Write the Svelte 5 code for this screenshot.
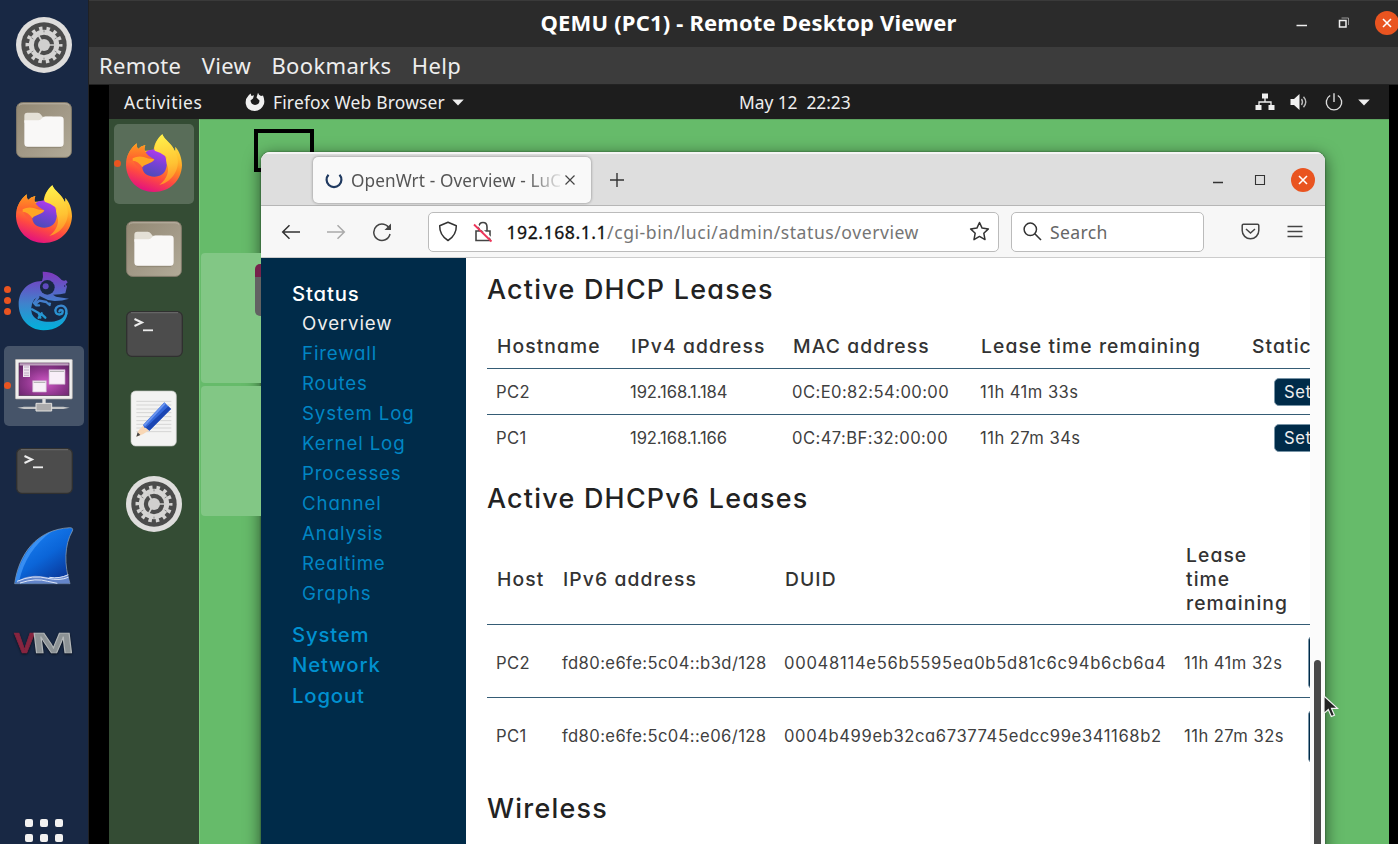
<script>
  const menus = ['Remote', 'View', 'Bookmarks', 'Help'];
  const statusLinks = ['Overview', 'Firewall', 'Routes', 'System Log', 'Kernel Log', 'Processes', 'Channel', 'Analysis', 'Realtime', 'Graphs'];
  const topLinks = ['System', 'Network', 'Logout'];
  const leases4 = [
    { host: 'PC2', ip: '192.168.1.184', mac: '0C:E0:82:54:00:00', left: '11h 41m 33s' },
    { host: 'PC1', ip: '192.168.1.166', mac: '0C:47:BF:32:00:00', left: '11h 27m 34s' }
  ];
  const leases6 = [
    { host: 'PC2', ip: 'fd80:e6fe:5c04::b3d/128', duid: '00048114e56b5595ea0b5d81c6c94b6cb6a4', left: '11h 41m 32s' },
    { host: 'PC1', ip: 'fd80:e6fe:5c04::e06/128', duid: '0004b499eb32ca6737745edcc99e341168b2', left: '11h 27m 32s' }
  ];
</script>

{#snippet gear()}
  <svg width="56" height="56" viewBox="0 0 168 168">
    <circle cx="84" cy="84" r="84" fill="#dedddc" />
    <circle cx="84" cy="84" r="68" fill="#4b4b4b" />
    <circle cx="84" cy="84" r="49" fill="none" stroke="#d5d4d3" stroke-width="13" stroke-dasharray="10 11.99" stroke-dashoffset="5" />
    <circle cx="84" cy="84" r="38" fill="none" stroke="#d5d4d3" stroke-width="15" />
    <circle cx="84" cy="84" r="18" fill="#d0cfce" />
    <path d="M84 84H122M84 84L65 51M84 84L65 117" stroke="#d0cfce" stroke-width="5" />
    <path d="M84 40v6M46 62l6 4M46 106l6-4M84 128v-6M122 106l-6-4M122 62l-6 4" stroke="#888" stroke-width="3" />
  </svg>
{/snippet}

{#snippet files()}
  <svg width="56" height="56" viewBox="0 0 57 57">
    <defs>
      <linearGradient id="tan" x1="0" y1="0" x2="1" y2="1"><stop stop-color="#928873" /><stop offset=".55" stop-color="#a39a88" /><stop offset="1" stop-color="#b2ab98" /></linearGradient>
    </defs>
    <rect x=".6" y=".6" width="55.8" height="55.8" rx="6" fill="url(#tan)" stroke="#81796a" />
    <path d="M3 3.5Q4 1.8 7 1.8H50Q53 1.8 54 3.5" fill="none" stroke="#bbb3a5" />
    <path d="M8.5 21V14Q8.5 11 11.5 11H22Q24 11 25.5 13L27 15H37V22Z" fill="#e4e0d6" />
    <path d="M8.5 18.5H23Q25 18.5 26.5 16.5Q28 14.8 30 14.8H45Q48.5 14.8 48.5 18V42Q48.5 45.6 45 45.6H12Q8.5 45.6 8.5 42Z" fill="#f9f8f7" />
    <path d="M11 46.4H46" stroke="#857c69" stroke-opacity=".65" />
  </svg>
{/snippet}

{#snippet firefox()}
  <svg class="fox" width="56" height="58" viewBox="48 556 168 174">
    <defs>
      <linearGradient id="flame" x1=".75" y1="0" x2=".4" y2="1"><stop stop-color="#fff250" /><stop offset=".32" stop-color="#ffc02d" /><stop offset=".52" stop-color="#ff8b22" /><stop offset=".74" stop-color="#ff4a41" /><stop offset="1" stop-color="#e3127f" /></linearGradient>
      <linearGradient id="globe" x1=".7" y1="0" x2=".4" y2="1"><stop stop-color="#b63af0" /><stop offset=".5" stop-color="#7842d6" /><stop offset="1" stop-color="#4e4bb9" /></linearGradient>
      <linearGradient id="wave" x1=".4" y1="0" x2=".5" y2="1"><stop stop-color="#fff04b" /><stop offset=".6" stop-color="#ffc333" /><stop offset="1" stop-color="#ff8a28" /></linearGradient>
      <linearGradient id="rim" x1="0" y1="0" x2="0" y2="1"><stop stop-color="#ff9d20" /><stop offset=".5" stop-color="#ff6a2d" /><stop offset="1" stop-color="#ff3a50" stop-opacity="0" /></linearGradient>
    </defs>
    <path d="M157 557C163 574 187 584 195 610L196 594C209 609 216 630 216 650C214 698 178 730 132 730C85 730 50 697 48 650C48 621 59 603 80 584Q79 594 84 601Q92 592 106 589Q102 598 104 606L131 605C132 586 142 569 157 557Z" fill="url(#flame)" />
    <path d="M104 612Q124 596 149 607L164 618L171 640Q171 682 134 684Q97 682 96 651Z" fill="url(#globe)" />
    <path d="M157 557C166 580 190 586 201 622C212 660 187 700 148 709C172 690 180 665 170 646Q166 634 170 625Q153 611 134 606C133 590 142 570 157 557Z" fill="url(#wave)" />
    <path d="M80 584Q79 594 84 601Q92 592 106 589Q101 601 106 610Q112 621 133 632Q130 641 107 648Q98 653 101 666Q79 656 69 636Q48 632 50 638Q52 606 80 584Z" fill="url(#rim)" />
    <path d="M68 629Q83 621 101 625Q113 631 133 632Q130 641 107 648Q99 650 97 656Q85 637 68 636Z" fill="#ffa624" />
  </svg>
{/snippet}

{#snippet terminal()}
  <svg width="57" height="46" viewBox="0 0 57 46">
    <rect x=".7" y=".7" width="55.6" height="44.6" rx="5" fill="#4c4c4c" stroke="#303030" stroke-width="1.3" />
    <path d="M5 1.7H52" stroke="#777" stroke-width=".8" />
    <path d="M8.5 8L16 11.5L8.5 15" fill="none" stroke="#ececec" stroke-width="2" />
    <path d="M17 19.3H27" stroke="#ececec" stroke-width="1.8" />
  </svg>
{/snippet}

<div class="shell">
  <aside class="dock host">
    <div class="slot">{@render gear()}</div>
    <div class="slot">{@render files()}</div>
    <div class="slot">{@render firefox()}</div>
    <div class="slot">
      <span class="pips"><i></i><i></i><i></i></span>
      <svg width="52" height="60" viewBox="55 63 156 180">
        <defs><linearGradient id="cham" gradientUnits="userSpaceOnUse" x1="0" y1="65" x2="0" y2="241"><stop stop-color="#8038bd" /><stop offset=".25" stop-color="#6257c6" /><stop offset=".55" stop-color="#3f83cc" /><stop offset="1" stop-color="#00b2db" /></linearGradient></defs>
        <path d="M129 65C155 64 178 78 186 90Q194 94 199 90L204 97L198 103L202 109L197 130L181 133L160 134L169 140L208 146Q188 153 165 153L145 150L120 138L104 148L97 162L94 178L97 192Q103 205 119 211C152 222 188 212 195 194L204 188C200 222 168 241 131 241C86 240 57 204 57 163C57 121 87 94 127 93Q132 82 129 65Z" fill="url(#cham)" />
        <path d="M116 141L103 159L109 166H118M109 161L119 152L140 156L150 165M144 160L151 161M97 178L117 189L122 203M126 190L117 203M124 191L137 203" fill="none" stroke="url(#cham)" stroke-width="7" stroke-linecap="round" stroke-linejoin="round" />
        <path d="M199 194C204 177 195 167 184 167C171 167 165 177 168 186C171 196 188 196 189 186C190 179 181 178 179 184" fill="none" stroke="url(#cham)" stroke-width="7" stroke-linecap="round" />
        <circle cx="143" cy="112" r="22" fill="#182844" /><circle cx="138" cy="109" r="9" fill="#5d4abe" />
        <circle cx="195" cy="108" r="2" fill="#182844" />
      </svg>
    </div>
    <div class="slot">
      <span class="tile"></span><span class="pips"><i></i></span>
      <svg class="remote" width="58" height="54" viewBox="45 327 174 162">
        <defs><radialGradient id="plum" cx=".52" cy=".6" r=".7"><stop stop-color="#cf58c5" /><stop offset=".55" stop-color="#91378f" /><stop offset="1" stop-color="#632466" /></radialGradient></defs>
        <rect x="46" y="328" width="171" height="119" rx="3" fill="#efeeed" stroke="#aaa6a3" stroke-width="2" />
        <rect x="57" y="339" width="150" height="98" fill="url(#plum)" stroke="#533553" stroke-width="2" />
        <path d="M59 343H206" stroke="#bd9fbd" stroke-width="7" />
        <path d="M69 346H90V381H69Z" fill="#eee4ef" /><path d="M72 351H87M72 360H87M72 369H87M72 376H87" stroke="#aa91af" stroke-width="2" />
        <path d="M147 359H195V403H147ZM98 392H139V426H98Z" fill="#f8eff8" stroke="#c3a6c5" stroke-width="2" />
        <path d="M150 364H192M101 397H136" stroke="#aaa" stroke-width="3" />
        <path d="M132 447V463" stroke="#ddd" stroke-width="10" />
        <path d="M52 473L72 470H190L209 473L190 477H72Z" fill="#c5c6c7" />
        <path d="M108 460H155V483H108Z" fill="#ababac" stroke="#e2e1df" stroke-width="3" />
      </svg>
    </div>
    <div class="slot">{@render terminal()}</div>
    <div class="slot">
      <svg width="60" height="58" viewBox="44 80 180 174">
        <defs><linearGradient id="fin" x1=".2" y1="0" x2=".9" y2="1"><stop stop-color="#1c84f7" /><stop offset=".5" stop-color="#0b65d8" /><stop offset="1" stop-color="#082d8c" /></linearGradient></defs>
        <path d="M46 250C59 161 111 88 211 82Q223 82 219 92C195 133 194 194 212 250Z" fill="url(#fin)" stroke="#99aabb" stroke-width="2" />
        <path d="M48 246C61 176 100 116 158 93C104 133 73 180 59 245Z" fill="#54a5ff" fill-opacity=".6" />
        <path d="M48 248Q81 220 128 228Q170 238 206 223L211 249Z" fill="#6485ca" />
        <path d="M53 243Q101 222 145 234Q182 242 207 231M62 248Q110 232 145 243L174 249M150 231Q180 236 207 223" fill="none" stroke="#dce6f9" stroke-width="3" />
      </svg>
    </div>
    <div class="slot"><span class="vm"><em>V</em><em>M</em></span></div>
    <div class="apps">{#each Array(9) as _}<i></i>{/each}</div>
  </aside>

  <main class="viewer">
    <header class="titlebar">
      <span class="spacer"></span>
      <h1>QEMU (PC1) - Remote Desktop Viewer</h1>
      <div class="controls">
        <svg width="12" height="12" viewBox="0 0 12 12"><path d="M.5 8.5H11" stroke="#eee" stroke-width="1.5" /></svg>
        <svg width="12" height="12" viewBox="0 0 12 12"><path d="M1.5 3.5H8V10H1.5Z" fill="none" stroke="#eee" stroke-width="1.5" /><path d="M3.5 1H10.5V8" fill="none" stroke="#999" /></svg>
        <span class="close"><svg width="12" height="12" viewBox="0 0 12 12"><path d="M2 2L10 10M10 2L2 10" stroke="#fff" stroke-width="1.6" /></svg></span>
      </div>
    </header>
    <nav class="menubar">{#each menus as item}<span>{item}</span>{/each}</nav>

    <section class="screen">
      <header class="topbar">
        <span class="activities">Activities</span>
        <svg class="ff" width="20" height="20" viewBox="0 0 20 20"><path d="M3.5 3.5L5.5 1.5L6.5 4L9 3.2L8 6.5L5.5 8.5Q6 12.5 10 13Q14.5 12.5 14.5 8.5L11.5 5.5L13 .8Q13.5 3 16 4L18 3.5Q20 8 19 12Q16 19 9.8 19Q2 19 .8 12Q0 7 3.5 3.5Z" fill="#f0f0f0" /></svg>
        <span class="appname">Firefox Web Browser</span>
        <svg class="caret" width="12" height="7" viewBox="0 0 12 7"><path d="M.2.5H11.8L6 6.6Z" fill="#eee" /></svg>
        <span class="clock">May 12&nbsp; 22:23</span>
        <div class="tray">
          <svg width="20" height="18" viewBox="0 0 20 18"><path d="M10 5V9M4 13V9H16V13" fill="none" stroke="#eee" stroke-width="1.3" /><path d="M7 .5H13V5.5H7ZM.5 12H6.5V17H.5ZM13.5 12H19.5V17H13.5Z" fill="#f0f0f0" /></svg>
          <svg width="19" height="18" viewBox="0 0 19 18"><path d="M.5 6H4L9.5 1V17L4 12H.5Z" fill="#f0f0f0" /><path d="M11.5 6Q13.5 9 11.5 12M13.5 3.8Q18 9 13.5 14.2" fill="none" stroke="#bbb" stroke-width="1.4" /></svg>
          <svg width="18" height="18" viewBox="0 0 18 18"><path d="M5.2 2.5A7.7 7.7 0 1 0 12.8 2.5M9 .2V9" fill="none" stroke="#ddd" stroke-width="1.4" /></svg>
          <svg width="12" height="7" viewBox="0 0 12 7"><path d="M.2.5H11.8L6 6.6Z" fill="#eee" /></svg>
        </div>
      </header>

      <div class="workspace">
        <aside class="dock guest">
          <div class="slot"><span class="tile"></span><span class="pips"><i></i></span>{@render firefox()}</div>
          <div class="slot">{@render files()}</div>
          <div class="slot">{@render terminal()}</div>
          <div class="slot">
            <svg width="48" height="58" viewBox="391 423 144 174">
              <rect x="394" y="426" width="136" height="165" rx="14" fill="#f3f3f2" stroke="#c2c5c1" stroke-width="2" />
              <path d="M410 457H515M410 468H515M410 480H515M410 491H515M410 503H515M410 515H515M410 526H515M410 537H515M410 548H515" stroke="#d5d5d4" stroke-width="3" />
              <path d="M410 563L416 545L430 530L448 544L431 555Z" fill="#f8d7b5" /><path d="M410 563L414 550L422 558Z" fill="#444" />
              <path d="M430 528L494 460L514 480L449 545L444 536L435 537Z" fill="#3569db" />
              <path d="M438 536L506 472L514 480L449 545Z" fill="#1b46b3" /><path d="M432 527L494 461L498 465L436 532Z" fill="#6a94ee" />
            </svg>
          </div>
          <div class="slot">{@render gear()}</div>
        </aside>

        <div class="desktop">
          <div class="outline"></div>
          <div class="panel first"></div>
          <div class="panel second"></div>
          <div class="folder"></div>

          <article class="browser">
            <header class="tabs">
              <div class="tab">
                <svg width="18" height="18" viewBox="0 0 18 18"><path d="M3.5 3.8A7.4 7.4 0 1 0 14.5 3.8" fill="none" stroke="#203a60" stroke-width="2.2" /></svg>
                <span class="tabname">OpenWrt - Overview - LuCI</span>
                <svg width="12" height="12" viewBox="0 0 12 12"><path d="M1.5 1.5L10.5 10.5M10.5 1.5L1.5 10.5" stroke="#444" stroke-width="1.2" /></svg>
              </div>
              <svg class="plus" width="16" height="16" viewBox="0 0 16 16"><path d="M8 1V15M1 8H15" stroke="#333" stroke-width="1.4" /></svg>
              <div class="controls">
                <svg width="12" height="12" viewBox="0 0 12 12"><path d="M1 8.5H11" stroke="#333" stroke-width="1.3" /></svg>
                <svg width="12" height="12" viewBox="0 0 12 12"><path d="M1.5 1.5H10.5V10.5H1.5Z" fill="none" stroke="#333" stroke-width="1.1" /></svg>
                <span class="close"><svg width="12" height="12" viewBox="0 0 12 12"><path d="M2 2L10 10M10 2L2 10" stroke="#fff" stroke-width="1.6" /></svg></span>
              </div>
            </header>

            <div class="toolbar">
              <svg class="back" width="20" height="16" viewBox="0 0 20 16"><path d="M19 8H2M8.5 1.2L1.7 8L8.5 14.8" fill="none" stroke="#333" stroke-width="1.5" /></svg>
              <svg class="fwd" width="20" height="16" viewBox="0 0 20 16"><path d="M1 8H18M11.5 1.2L18.3 8L11.5 14.8" fill="none" stroke="#aaa" stroke-width="1.5" /></svg>
              <svg class="reload" width="20" height="20" viewBox="0 0 20 20"><path d="M17.5 7A8.2 8.2 0 1 0 18 12" fill="none" stroke="#444" stroke-width="1.5" /><path d="M19 1.5V8H12.5Z" fill="#444" /></svg>
              <div class="url">
                <svg width="20" height="21" viewBox="0 0 20 21"><path d="M10 1.2L18.3 4.7Q18.6 14 10 19.5Q1.4 14 1.7 4.7Z" fill="none" stroke="#333" stroke-width="1.5" stroke-linejoin="round" /></svg>
                <svg class="lock" width="20" height="22" viewBox="0 0 20 22"><path d="M3 10H17V19.5H3ZM6 10V6Q6 1.5 10 1.5Q14 1.5 14 6V10" fill="none" stroke="#444" stroke-width="1.6" /><path d="M2.5 2L19.5 18.5" stroke="#fff" stroke-width="1.6" /><path d="M1 3.5L18.5 20.5" stroke="#ee3459" stroke-width="1.8" /></svg>
                <span class="address"><b>192.168.1.1</b>/cgi-bin/luci/admin/status/overview</span>
                <svg width="21" height="21" viewBox="0 0 21 21"><path d="M10.5 1.5L13.1 7.1L19.4 7.9L14.8 12.2L16 18.6L10.5 15.4L5 18.6L6.2 12.2L1.6 7.9L7.9 7.1Z" fill="none" stroke="#333" stroke-width="1.5" stroke-linejoin="round" /></svg>
              </div>
              <div class="search">
                <svg width="19" height="19" viewBox="0 0 19 19"><circle cx="7.3" cy="7.3" r="6.2" fill="none" stroke="#333" stroke-width="1.5" /><path d="M11.8 11.8L18 18" stroke="#333" stroke-width="1.6" /></svg>
                <span>Search</span>
              </div>
              <svg class="pocket" width="19" height="17" viewBox="0 0 19 17"><path d="M2.5 1.2H16.5Q17.8 1.2 17.8 2.5V7.5A8.3 8.3 0 0 1 1.2 7.5V2.5Q1.2 1.2 2.5 1.2ZM5 6L9.5 10L14 6" fill="none" stroke="#444" stroke-width="1.5" /></svg>
              <svg class="burger" width="16" height="14" viewBox="0 0 16 14"><path d="M.5 1.5H15.5M.5 6.5H15.5M.5 11.5H15.5" stroke="#444" stroke-width="1.4" /></svg>
            </div>

            <div class="page">
              <nav class="luci">
                <b>Status</b>
                {#each statusLinks as link, i}<span class:current={i === 0}>{link}</span>{/each}
                <div class="top">{#each topLinks as link}<b>{link}</b>{/each}</div>
              </nav>
              <div class="content">
                <h3>Active DHCP Leases</h3>
                <div class="table v4">
                  <div class="row head"><span>Hostname</span><span>IPv4 address</span><span>MAC address</span><span>Lease time remaining</span><span>Static Lease</span></div>
                  {#each leases4 as lease}
                    <div class="row"><span>{lease.host}</span><span class="ip">{lease.ip}</span><span class="mac">{lease.mac}</span><span>{lease.left}</span><span class="action"><button>Set Static</button></span></div>
                  {/each}
                </div>
                <h3 class="next">Active DHCPv6 Leases</h3>
                <div class="table v6">
                  <div class="row head"><span>Host</span><span>IPv6 address</span><span>DUID</span><span class="narrow">Lease time remaining</span><span></span></div>
                  {#each leases6 as lease}
                    <div class="row"><span>{lease.host}</span><span class="ip">{lease.ip}</span><span class="duid">{lease.duid}</span><span>{lease.left}</span><span class="action"><button aria-label="Set Static"></button></span></div>
                  {/each}
                </div>
                <h3 class="next">Wireless</h3>
              </div>
              <div class="scroll"><i></i></div>
            </div>
          </article>
          <svg class="pointer" width="16" height="24" viewBox="0 0 16 24"><path d="M1 1V18.5L5.3 14.6L8.3 21.5L11.5 20.2L8.5 13.4H14.5Z" fill="#222" stroke="#f4f4f4" stroke-width="1.2" /></svg>
        </div>
      </div>
    </section>
  </main>
</div>

<style>
  :global(body) { margin: 0; overflow: hidden; background: #000; }
  * { box-sizing: border-box; }
  svg { display: block; flex: none; }
  h1, h3 { margin: 0; }

  .shell { display: flex; width: 1398px; height: 844px; overflow: hidden; font-family: "Noto Sans", sans-serif; color: #eee; }

  .dock { display: flex; flex-direction: column; flex: none; overflow: hidden; }
  .host { width: 89px; padding-top: 2.4px; background: #182844; border-right: 1px solid #202124; }
  .guest { width: 90px; padding-top: 2px; background: #344c34; }
  .slot { position: relative; display: grid; place-items: center; flex: none; height: 85.2px; }
  .guest .slot { height: 85px; }
  .slot > svg { position: relative; }
  .slot > .fox { margin-bottom: 2px; }
  .tile { position: absolute; inset: 2.6px 4px; background: #465469; border-radius: 5px; }
  .guest .tile { inset: 2.5px 5px; background: #596d59; }
  .pips { position: absolute; left: 4px; top: 0; bottom: 0; display: flex; flex-direction: column; justify-content: center; gap: 4px; }
  .guest .pips { left: 5px; }
  .pips i { width: 7px; height: 7px; border-radius: 50%; background: #e95420; }
  .vm { display: flex; width: 60px; height: 30px; padding-top: 3px; align-items: center; font: 900 29px/30px "Liberation Sans", sans-serif; filter: drop-shadow(0 1px 1px #0009); }
  .vm em { font-style: normal; transform-origin: 0 50%; -webkit-text-stroke: .7px #b4b8ba; color: #8c9295; width: 18px; }
  .vm em:first-child { color: #862540; -webkit-text-stroke: .7px #862540; transform: scaleX(1.08); }
  .vm em:last-child { transform: scaleX(1.72) skewX(4deg); }
  .apps { display: grid; grid-template-columns: repeat(3, 8px); gap: 7px; margin: 135.4px 0 0 25px; flex: none; }
  .apps i { width: 8px; height: 8px; border-radius: 2px; background: #f2f1f0; }

  .viewer { display: flex; flex-direction: column; flex: 1; min-width: 0; }
  .titlebar { display: grid; grid-template-columns: 1fr auto 1fr; align-items: center; flex: none; height: 47px; padding-bottom: 2px; background: #2b2b2b; border-top: 1px solid #3a3a3a; }
  h1 { margin: -2px 0 0 10px; font-size: 22px; line-height: 30px; letter-spacing: .18px; font-weight: 700; color: #fff; white-space: nowrap; }
  .controls { display: flex; align-items: center; justify-content: flex-end; gap: 30px; }
  .titlebar .controls { margin-right: -1px; }
  .close { display: grid; place-items: center; width: 24px; height: 24px; margin-left: -5px; border-radius: 50%; background: #e95420; }
  .menubar { display: flex; align-items: center; gap: 20.3px; flex: none; height: 38px; padding: 0 0 1px 10px; background: #3c3c3c; border-bottom: 1px solid #222; font-size: 22px; letter-spacing: .34px; }

  .screen { display: flex; flex-direction: column; flex: 1; min-height: 0; padding: 0 9px 0 20px; background: #000; }
  .topbar { position: relative; display: flex; align-items: center; flex: none; height: 34px; padding: 0 19px 0 15px; background: #1d1d1d; font-size: 17.4px; letter-spacing: .2px; white-space: nowrap; }
  .activities { letter-spacing: .6px; }
  .ff { margin-left: 42.5px; }
  .appname { margin-left: 8px; }
  .caret { margin-left: 7px; }
  .clock { position: absolute; left: 630px; letter-spacing: -.05px; }
  .tray { display: flex; align-items: center; gap: 15.4px; margin-left: auto; }

  .workspace { display: flex; flex: 1; min-height: 0; }
  .desktop { position: relative; flex: 1; overflow: hidden; background: #66bb6a; border-top: 1px solid #5da460; border-left: 1px solid #78cc7a; }
  .outline { position: absolute; left: 54px; top: 9px; width: 60px; height: 43px; border: 4px solid #000; }
  .panel { position: absolute; left: 1px; width: 100px; height: 130px; border-radius: 4px; background: #82c785; }
  .first { top: 133px; }
  .second { top: 266px; }
  .folder { position: absolute; left: 55px; top: 144px; width: 40px; height: 52px; border-radius: 5px; background: linear-gradient(#76224b 13px, #626262 13px); }

  .desktop::before { content: ''; position: absolute; z-index: 0; left: 61px; top: 32px; width: 1064px; height: 740px; border-radius: 9px; box-shadow: 0 4px 16px 1px #0008, 0 0 2px #0008; }
  .browser { position: absolute; z-index: 1; left: 61px; top: 31.5px; width: 1064px; height: 740px; display: flex; flex-direction: column; overflow: hidden; border-radius: 9px 9px 0 0; background: #fff; color: #333; }
  .tabs { display: flex; align-items: center; flex: none; height: 54.5px; background: #dedede; border-top: 2px solid #f5f5f5; border-bottom: 1px solid #b6b6b6; padding: 1px 10px 0 52px; }
  .tab { display: flex; align-items: center; width: 278px; height: 46px; padding: 1px 15px 0 12px; border-radius: 5px; background: #f9f9f9; box-shadow: 0 0 3px #0006; font-size: 17.2px; color: #555; }
  .tabname { flex: 1; margin: 0 3px 0 8px; overflow: hidden; white-space: nowrap; letter-spacing: .1px; mask-image: linear-gradient(90deg, #000 176px, transparent 213px); }
  .plus { margin-left: 18px; }
  .tabs .controls { margin-left: auto; }
  .toolbar { display: flex; align-items: center; flex: none; height: 52px; padding-left: 20px; background: #f7f7f7; border-bottom: 1px solid #ccc; }
  .fwd { margin-left: 25px; }
  .reload { margin-left: 26px; }
  .url, .search { display: flex; align-items: center; height: 40px; background: #fff; border: 1px solid #bbb; border-radius: 5px; }
  .url { width: 571px; margin-left: 36px; padding: 0 8px 0 9px; }
  .lock { margin-left: 15px; }
  .address { flex: 1; margin-left: 13.5px; color: #757575; font-size: 17.6px; letter-spacing: .54px; white-space: nowrap; }
  .address b { font-weight: 400; color: #111; -webkit-text-stroke: .3px #111; }
  .search { width: 193px; margin-left: 12px; padding-left: 11px; font-size: 17.6px; letter-spacing: .35px; color: #666; }
  .search span { margin-left: 8px; }
  .pocket { margin-left: 37px; }
  .burger { margin-left: 27px; }

  .page { display: flex; flex: 1; min-height: 0; font-family: Inter, sans-serif; font-feature-settings: "cv11"; }
  .luci { display: flex; flex-direction: column; width: 205px; flex: none; padding: 20.5px 0 0 31px; background: #002b49; color: #0086c4; font-size: 18.7px; line-height: 30px; letter-spacing: .85px; }
  .luci b { font-size: 20.3px; font-weight: 500; line-height: 30.5px; color: #0091d0; }
  .luci > b { color: #fff; }
  .luci span { padding-left: 10px; }
  .luci .current { color: #eee; }
  .top { display: flex; flex-direction: column; margin-top: 10.5px; }
  .content { width: 844px; flex: none; padding-left: 21px; overflow: hidden; }
  h3 { height: 65px; font-size: 26.9px; line-height: 62px; font-weight: 450; letter-spacing: 1.25px; color: #222; white-space: nowrap; }
  .next { height: 66px; margin-top: 7px; line-height: 62px; }
  .table { width: 900px; }
  .row { display: grid; align-items: center; height: 46px; padding: 1px 0 0 9px; border-top: 1px solid #355c75; font-size: 16.6px; letter-spacing: .45px; color: #404040; white-space: nowrap; }
  .row.head { height: 45px; padding: 0 0 0 10px; border: 0; font-size: 19.3px; line-height: 24px; font-weight: 450; letter-spacing: 1.08px; color: #333; }
  .v4 .row { grid-template-columns: 134px 162px 188px 271px 1fr; }
  .v4 .ip { letter-spacing: -.1px; }
  .v4 .mac { letter-spacing: .42px; }
  .v6 .ip { letter-spacing: .4px; }
  .duid { letter-spacing: .72px; }
  .v6 .row { grid-template-columns: 66px 222px 400px 124px 1fr; height: 73px; padding-top: 3px; }
  .v6 .row.head { height: 91px; padding-top: 0; grid-template-columns: 66px 222px 401px 110px 1fr; }
  .v6 .row:last-child { padding-top: 4px; }
  .v6 .row:last-child .duid { letter-spacing: .6px; }
  .narrow { width: min-content; white-space: normal; }
  .v4 .action { padding-left: 23px; }
  button { display: block; width: 102px; height: 28px; padding: 0 9px; border: 1px solid #7894a6; border-radius: 5px; background: #002b49; color: #eee; font: inherit; letter-spacing: .6px; text-align: left; white-space: nowrap; }
  .v6 button { height: 53px; border-width: 0 0 0 1px; }
  .scroll { width: 15px; flex: none; padding: 402px 4px 0; background: #fbfbfb; }
  .scroll i { display: block; height: 300px; border-radius: 4px; background: #494949; }
  .pointer { position: absolute; z-index: 2; left: 1123px; top: 575px; }
</style>
